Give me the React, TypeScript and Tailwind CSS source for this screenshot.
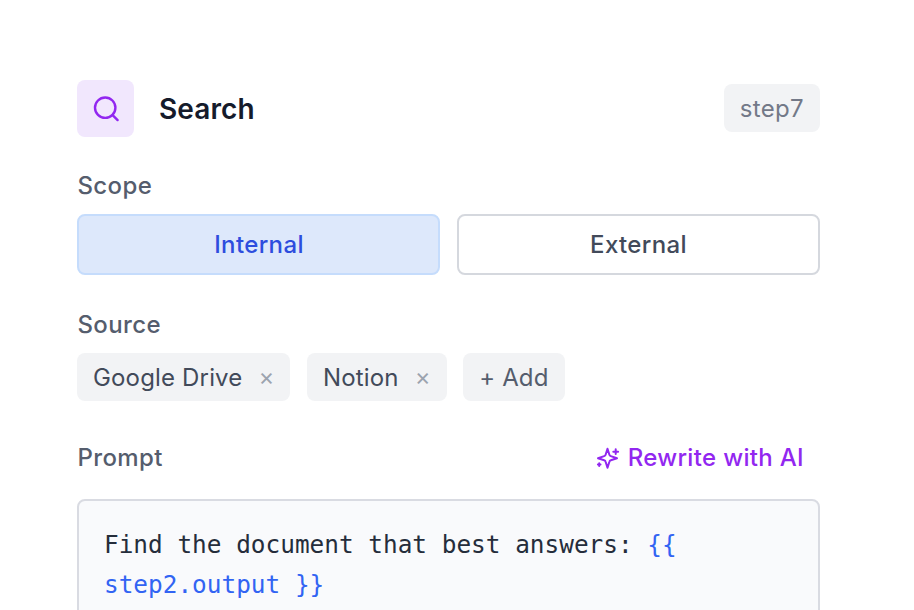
function SearchIcon() {
  return (
    <svg width="30" height="30" viewBox="0 0 30 30" fill="none" stroke="currentColor" strokeWidth="2.4" strokeLinecap="round">
      <circle cx="14.2" cy="13.7" r="10.2" />
      <path d="m21.6 21.1 5 5" />
    </svg>
  );
}

function Sparkle() {
  return (
    <svg width="24" height="24" viewBox="0 0 24 24" fill="none" stroke="currentColor" strokeWidth="2" strokeLinecap="round" strokeLinejoin="round">
      <path d="m11.5 2.7-1.9 6a2 2 0 0 1-1.4 1.4L2 12.2l6.2 2.1a2 2 0 0 1 1.4 1.4l1.9 6 1.9-6a2 2 0 0 1 1.4-1.4l6.2-2.1-6.2-2.1a2 2 0 0 1-1.4-1.4Z" />
      <path d="M19.7 3.3v4.8M22.1 5.7h-4.8M3.2 17.3v2.6M1.9 18.6h2.6" />
    </svg>
  );
}

function Chip({ label }: { label: string }) {
  return (
    <div className="flex h-12 items-center rounded-lg bg-[#f2f3f5] px-4 pt-px text-[#424a5a]">
      {label}
      <span className="-mt-px ml-4 text-[#9ca3af]">×</span>
    </div>
  );
}

export default function App() {
  return (
    <main className="h-[610px] overflow-hidden bg-white pr-[94px] pl-[77px] pt-[80px] font-['Inter',sans-serif] text-[24px] leading-8 tracking-[0.36px] antialiased">
      <header className="flex h-[57px] items-center">
        <div className="flex h-[57px] w-[57px] items-center justify-center rounded-lg bg-[#f1e7fd] text-[#9227f0]">
          <SearchIcon />
        </div>
        <h1 className="ml-[25px] text-[28px] font-semibold tracking-[0.1px] text-[#151b2b]">Search</h1>
        <span className="-mt-px ml-auto flex h-12 items-center rounded-lg bg-[#f2f3f5] px-4 pt-px text-[#737988]">step7</span>
      </header>
      <div className="mt-[33px] pl-[0.5px] font-medium text-[#555d6d]">Scope</div>
      <div className="mt-3 grid grid-cols-2 gap-[17px] font-medium">
        <button className="h-[61px] rounded-lg border-2 border-[#c5dcfc] bg-[#dde8fb] pl-px text-[#2d4dde]">Internal</button>
        <button className="h-[61px] rounded-lg border-2 border-[#d5d8de] text-[#424a5a]">External</button>
      </div>
      <div className="mt-[34px] pl-[0.5px] font-medium text-[#555d6d]">Source</div>
      <div className="mt-3 flex gap-[16.5px] tracking-[0.16px]">
        <Chip label="Google Drive" />
        <Chip label="Notion" />
        <div className="flex h-12 items-center rounded-lg bg-[#f2f3f5] px-4 pt-px text-[#555d6d]">+ Add</div>
      </div>
      <div className="mt-[41px] flex justify-between pr-4 pl-[0.5px] font-medium text-[#555d6d]">
        Prompt
        <span className="flex items-center gap-2 tracking-[0.33px] text-[#9227f0]"><Sparkle />Rewrite with AI</span>
      </div>
      <div className="mt-[25px] h-[140px] rounded-lg border-2 border-[#d9dbe2] bg-[#f9fafc] px-[25px] py-6 font-['DejaVu_Sans_Mono',monospace] text-[24.4px] leading-10 tracking-normal text-[#252d3b]">
        Find the document that best answers: <span className="text-[#3264f3]">{"{{"}<br />{"step2.output }}"}</span>
      </div>
    </main>
  );
}
